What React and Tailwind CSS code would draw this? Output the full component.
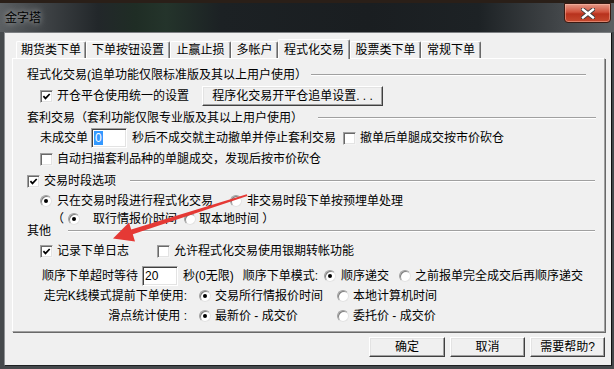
import React from 'react'

function Check({ on }) {
  return (
    <span className="flex items-center justify-center w-[13px] h-[13px] shrink-0 bg-white border border-t-[#a0a0a0] border-l-[#a0a0a0] border-b-[#f4f4f4] border-r-[#f4f4f4] shadow-[inset_1px_1px_0_#696969,inset_-1px_-1px_0_#e3e3e3]">
      {on && (
        <svg width="9" height="9" viewBox="0 0 9 9">
          <path d="M1.4 4.1 L3.5 6.4 L7.7 2" fill="none" stroke="#000" strokeWidth="1.7" />
        </svg>
      )}
    </span>
  )
}

function Radio({ on }) {
  return (
    <span className="flex items-center justify-center w-[12px] h-[12px] shrink-0 rounded-full bg-white border border-t-[#a0a0a0] border-l-[#a0a0a0] border-b-[#e3e3e3] border-r-[#e3e3e3] shadow-[inset_1px_1px_0_#808080]">
      {on && <span className="w-[4px] h-[4px] rounded-full bg-black" />}
    </span>
  )
}

function Line({ className }) {
  return <div className={'flex-1 h-[2px] border-t border-t-[#a0a0a0] border-b border-b-white ' + className} />
}

function Tab({ sel, className, children }) {
  if (sel) {
    return (
      <div className={'relative z-10 flex items-center justify-center h-[20px] bg-[#f0f0f0] border-t border-l border-t-white border-l-white border-r border-r-[#696969] shadow-[inset_-1px_0_0_#a0a0a0] rounded-t-[2px] ' + className}>
        {children}
      </div>
    )
  }
  return (
    <div className={'flex items-center justify-center h-[17px] mb-[1px] bg-[#f0f0f0] border-t border-l border-t-white border-l-white border-r border-r-[#696969] shadow-[inset_-1px_0_0_#a0a0a0] rounded-t-[2px] ' + className}>
      {children}
    </div>
  )
}

function Btn({ className, children }) {
  return (
    <div className={'flex items-center justify-center h-[20px] bg-[#f0f0f0] border border-t-white border-l-white border-b-[#404040] border-r-[#404040] shadow-[inset_-1px_-1px_0_#a0a0a0,inset_1px_1px_0_#e3e3e3] ' + className}>
      {children}
    </div>
  )
}

function Field({ children }) {
  return (
    <div className="flex items-center w-[36px] h-[20px] px-[2px] bg-white border border-t-[#a0a0a0] border-l-[#a0a0a0] border-b-white border-r-white shadow-[inset_1px_1px_0_#404040,inset_-1px_-1px_0_#e3e3e3]">
      {children}
    </div>
  )
}

export default function App() {
  return (
    <div className="relative w-[614px] h-[369px] overflow-hidden bg-[#45494c] text-[12px] leading-[14px] text-black font-['Liberation_Sans','Noto_Sans_CJK_SC',sans-serif]">
      {/* title bar */}
      <div className="h-[32px] flex items-start justify-between border-t-[3px] border-t-[#2a1f18] bg-[linear-gradient(90deg,#5b5f62_0%,#3c4043_8%,#22272a_16%,#1f2d25_22%,#24342b_27%,#1c2124_36%,#1a1e21_60%,#1d2225_78%,#3f4346_90%,#5c6063_100%)]">
        <div className="pl-[5px] pt-[8px] text-[12px] text-black [text-shadow:0_0_6px_rgba(255,255,255,0.75)]">金字塔</div>
        <div className="mr-[3px] w-[47px] h-[20px] flex items-center justify-center rounded-b-[4px] border border-[#3a1a12] bg-[linear-gradient(180deg,#e49a88_0%,#d0523c_45%,#b8321d_55%,#c64a2f_100%)] shadow-[inset_0_0_0_1px_rgba(255,200,180,0.45)]">
          <svg width="14" height="11" viewBox="0 0 14 11">
            <path d="M2 1.5 L12 9.5 M12 1.5 L2 9.5" stroke="#3b3b3b" strokeWidth="4.2" strokeLinecap="square" />
            <path d="M2 1.5 L12 9.5 M12 1.5 L2 9.5" stroke="#ffffff" strokeWidth="2.4" strokeLinecap="square" />
          </svg>
        </div>
      </div>

      {/* client area */}
      <div className="ml-[4px] w-[608px] h-[334px] bg-[#f0f0f0] border border-l-[#8e9194] border-t-[#7c7f82] border-r-[#111] border-b-[#1d1f21]">
        {/* tabs */}
        <div className="mt-[6px] pl-[11px] h-[20px] flex items-end">
          <Tab className="w-[70px]">期货类下单</Tab>
          <Tab className="w-[84px]">下单按钮设置</Tab>
          <Tab className="w-[61px]">止赢止损</Tab>
          <Tab className="w-[47px]">多帐户</Tab>
          <Tab sel className="w-[72px]">程式化交易</Tab>
          <Tab className="w-[71px]">股票类下单</Tab>
          <Tab className="w-[60px]">常规下单</Tab>
        </div>

        {/* panel */}
        <div className="-mt-[1px] ml-[7px] w-[593px] h-[274px] pt-[7px] bg-[#f0f0f0] border border-t-white border-l-white border-r-[#a0a0a0] border-b-[#a0a0a0] shadow-[1px_1px_0_#696969]">
          <div className="flex items-center h-[18px] pl-[14px]">
            <span>程式化交易(追单功能仅限标准版及其以上用户使用）</span>
            <Line className="ml-[4px] mr-[18px]" />
          </div>
          <div className="flex items-center h-[24px] pl-[27px]">
            <Check on />
            <span className="ml-[4px]">开仓平仓使用统一的设置</span>
            <Btn className="ml-[13px] w-[181px]">程序化交易开平仓追单设置. . .</Btn>
          </div>
          <div className="flex items-center h-[20px] pl-[14px]">
            <span>套利交易（套利功能仅限专业版及其以上用户使用）</span>
            <Line className="ml-[15px] mr-[8px]" />
          </div>
          <div className="flex items-center h-[20px] pl-[27px]">
            <span>未成交单</span>
            <div className="ml-[3px]">
              <Field>
                <span className="px-[1px] bg-[#3399ff] text-white leading-[14px]">0</span>
              </Field>
            </div>
            <span className="ml-[5px]">秒后不成交就主动撤单并停止套利交易</span>
            <span className="ml-[7px]"><Check /></span>
            <span className="ml-[4px]">撤单后单腿成交按市价砍仓</span>
          </div>
          <div className="flex items-center h-[22px] pl-[27px]">
            <Check />
            <span className="ml-[4px]">自动扫描套利品种的单腿成交，发现后按市价砍仓</span>
          </div>
          <div className="flex items-center h-[22px] pl-[14px]">
            <Check on />
            <span className="ml-[4px]">交易时段选项</span>
            <Line className="ml-[14px] mr-[9px]" />
          </div>
          <div className="flex items-center h-[18px] pl-[27px]">
            <Radio on />
            <span className="ml-[5px]">只在交易时段进行程式化交易</span>
            <span className="ml-[17px]"><Radio /></span>
            <span className="ml-[5px]">非交易时段下单按预埋单处理</span>
          </div>
          <div className="flex items-center h-[17px] pl-[39px]">
            <span>（</span>
            <span className="ml-[4px]"><Radio on /></span>
            <span className="ml-[13px]">取行情报价时间</span>
            <span className="ml-[7px]"><Radio /></span>
            <span className="ml-[3px]">取本地时间 ）</span>
          </div>
          <div className="flex items-center h-[8px] pl-[14px]">
            <span>其他</span>
            <Line className="ml-[17px] mr-[9px]" />
          </div>
          <div className="flex items-center h-[32px] pl-[27px]">
            <Check on />
            <span className="ml-[4px]">记录下单日志</span>
            <span className="ml-[28px]"><Check /></span>
            <span className="ml-[4px]">允许程式化交易使用银期转帐功能</span>
          </div>
          <div className="flex items-center h-[18px] pl-[29px]">
            <span>顺序下单超时等待</span>
            <div className="ml-[4px]">
              <Field>
                <span>20</span>
              </Field>
            </div>
            <span className="ml-[5px]">秒(0无限)</span>
            <span className="ml-[9px]">顺序下单模式:</span>
            <span className="ml-[6px]"><Radio on /></span>
            <span className="ml-[5px]">顺序递交</span>
            <span className="ml-[10px]"><Radio /></span>
            <span className="ml-[4px]">之前报单完全成交后再顺序递交</span>
          </div>
          <div className="flex items-center h-[22px]">
            <span className="w-[174px] text-right">走完K线模式提前下单使用:</span>
            <span className="ml-[12px]"><Radio on /></span>
            <span className="ml-[4px] w-[122px]">交易所行情报价时间</span>
            <Radio />
            <span className="ml-[4px]">本地计算机时间</span>
          </div>
          <div className="flex items-center h-[18px]">
            <span className="w-[174px] text-right">滑点统计使用 :</span>
            <span className="ml-[12px]"><Radio on /></span>
            <span className="ml-[4px] w-[122px]">最新价 - 成交价</span>
            <Radio />
            <span className="ml-[4px]">委托价 - 成交价</span>
          </div>
        </div>

        {/* buttons */}
        <div className="mt-[5px] pr-[6px] flex justify-end gap-[5px]">
          <Btn className="w-[76px]">确定</Btn>
          <Btn className="w-[75px]">取消</Btn>
          <Btn className="w-[75px]">需要帮助?</Btn>
        </div>
      </div>

      {/* red annotation arrow */}
      <svg className="absolute left-0 top-0 pointer-events-none" width="614" height="369" viewBox="0 0 614 369">
        <polygon
          points="113,238.5 129,222.4 131.2,229.5 246.8,194.3 247.3,195.9 132.8,234.3 135,241.4"
          fill="#e53935"
        />
      </svg>
    </div>
  )
}
